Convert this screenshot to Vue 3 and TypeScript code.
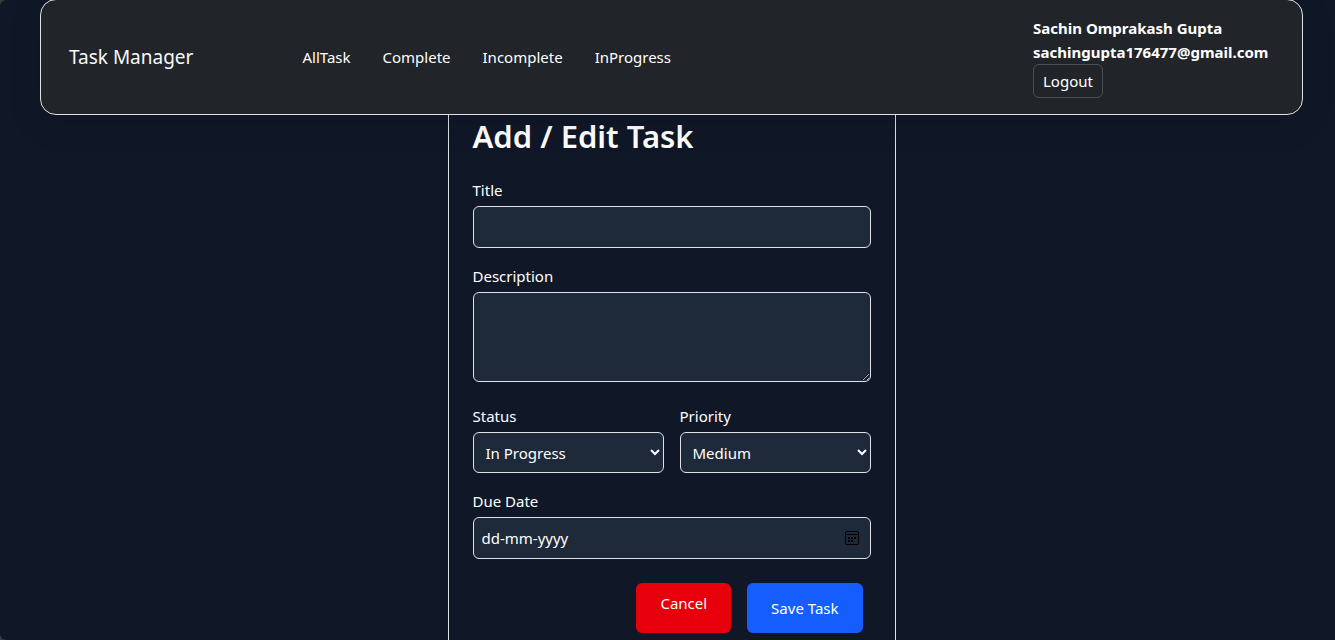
<script setup lang="ts">
import { ref } from 'vue'

interface NavLink {
  label: string
  href: string
}

const links: NavLink[] = [
  { label: 'AllTask', href: '#all' },
  { label: 'Complete', href: '#complete' },
  { label: 'Incomplete', href: '#incomplete' },
  { label: 'InProgress', href: '#in-progress' },
]

const statuses: string[] = ['Incomplete', 'In Progress', 'Complete']
const priorities: string[] = ['Low', 'Medium', 'High']

const title = ref('')
const description = ref('')
const status = ref('In Progress')
const priority = ref('Medium')
const dueDate = ref('')
</script>

<template>
  <div class="page">
    <header class="navbar">
      <a class="brand" href="#home">Task Manager</a>
      <nav class="links" aria-label="Tasks">
        <a v-for="link in links" :key="link.href" :href="link.href">{{ link.label }}</a>
      </nav>
      <div class="user">
        <strong>Sachin Omprakash Gupta</strong>
        <strong>sachingupta176477@gmail.com</strong>
        <button class="logout" type="button">Logout</button>
      </div>
    </header>

    <main class="card">
      <h1>Add / Edit Task</h1>
      <form @submit.prevent>
        <div class="field">
          <label for="title">Title</label>
          <input id="title" v-model="title" class="control" type="text" />
        </div>
        <div class="field">
          <label for="description">Description</label>
          <textarea id="description" v-model="description" class="control area"></textarea>
        </div>
        <div class="pair">
          <div class="field">
            <label for="status">Status</label>
            <select id="status" v-model="status" class="control">
              <option v-for="item in statuses" :key="item">{{ item }}</option>
            </select>
          </div>
          <div class="field">
            <label for="priority">Priority</label>
            <select id="priority" v-model="priority" class="control">
              <option v-for="item in priorities" :key="item">{{ item }}</option>
            </select>
          </div>
        </div>
        <div class="field">
          <label for="due">Due Date</label>
          <div class="control date">
            <input id="due" v-model="dueDate" type="text" placeholder="dd-mm-yyyy" />
            <button type="button" aria-label="Open calendar">
              <svg width="14" height="14" viewBox="0 0 14 14" aria-hidden="true">
                <rect x="0.5" y="0.5" width="13" height="13" rx="1.5" fill="none" stroke="#000" />
                <path d="M1 3.5H13" stroke="#000" />
                <path d="M3 6h2v2H3zM6 6h2v2H6zM9 6h2v2H9zM3 9h2v2H3zM6 9h2v2H6z" fill="#000" />
              </svg>
            </button>
          </div>
        </div>
        <div class="actions">
          <button class="cancel" type="button">Cancel</button>
          <button class="save" type="submit">Save Task</button>
        </div>
      </form>
    </main>
  </div>
</template>

<style>
html {
  background: #3b3b3b;
}

body {
  margin: 0;
}
</style>

<style scoped>
.page,
.page * {
  box-sizing: border-box;
}

.page {
  display: flex;
  flex-direction: column;
  align-items: center;
  min-height: 100vh;
  padding: 0 32px 0 40px;
  border-radius: 6px 0 0 6px;
  background: #101828;
  color: #fff;
  font: 15px/24px "Segoe UI", "Noto Sans", sans-serif;
}

button,
input,
select,
textarea {
  font: inherit;
  color: inherit;
}

button {
  cursor: pointer;
}

a {
  color: inherit;
  text-decoration: none;
}

.navbar {
  display: flex;
  align-items: center;
  align-self: stretch;
  margin-top: -1px;
  padding: 16px 28px;
  border: 1px solid #dee2e6;
  border-radius: 16px;
  background: #212529;
  box-shadow: 0 8px 32px rgba(0, 0, 0, 0.15);
  position: relative;
}

.brand {
  color: #f8f9fa;
  font-size: 19px;
  line-height: 26px;
}

.links {
  display: flex;
  gap: 32px;
  margin-left: 109px;
}

.user {
  display: flex;
  flex-direction: column;
  align-items: flex-start;
  min-width: 241px;
  margin-left: auto;
}

.logout {
  height: 34px;
  padding: 0 9px;
  border: 1px solid #495057;
  border-radius: 6px;
  background: transparent;
}

.card {
  flex: 1;
  width: 100%;
  max-width: 448px;
  padding: 2px 24px 7px;
  border: solid #dee2e6;
  border-width: 0 1px;
}

h1 {
  margin: 0 0 23px;
  font-size: 31px;
  font-weight: 600;
  line-height: 38px;
}

.field {
  display: flex;
  flex-direction: column;
  gap: 4px;
  margin-bottom: 16px;
}

.control {
  width: 100%;
  height: 42px;
  padding: 8px;
  border: 1px solid #dee2e6;
  border-radius: 6px;
  background-color: #1e2939;
}

.area {
  display: block;
  height: 90px;
  margin-bottom: 6px;
  resize: vertical;
}

select.control {
  height: 41px;
}

.pair {
  display: grid;
  grid-template-columns: 1fr 1fr;
  gap: 16px;
}

.date {
  display: flex;
  align-items: center;
  padding: 0 11px 0 8px;
}

.date input {
  flex: 1;
  min-width: 0;
  padding: 0;
  border: 0;
  outline: 0;
  background: transparent;
}

.date input::placeholder {
  color: #fff;
  opacity: 1;
}

.date button {
  display: flex;
  padding: 0;
  border: 0;
  background: transparent;
}

.actions {
  display: flex;
  justify-content: flex-end;
  gap: 16px;
  padding: 8px 8px 0 0;
}

.actions button {
  height: 50px;
  padding: 0 24px;
  border: 0;
  border-radius: 6px;
}

.actions .cancel {
  padding-bottom: 10px;
  background: #e7000b;
}

.actions .save {
  background: #155dfc;
}
</style>
